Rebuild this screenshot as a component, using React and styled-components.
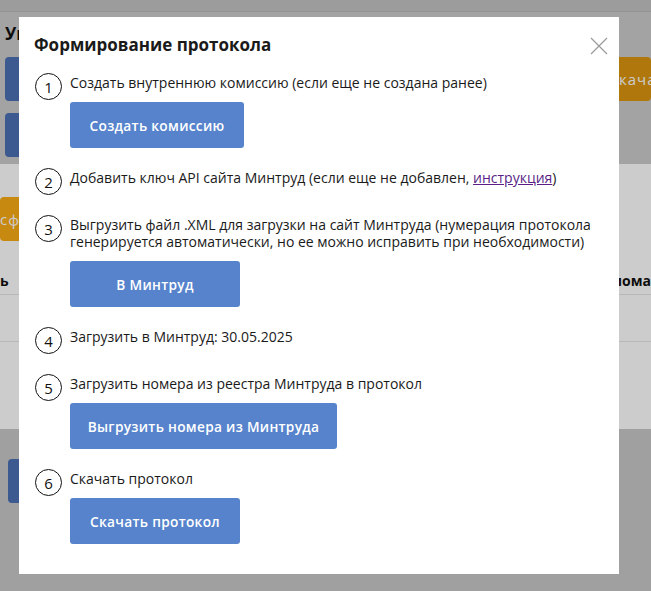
import React from "react";
import styled, { createGlobalStyle } from "styled-components";

const Global = createGlobalStyle`
  html, body { margin: 0; padding: 0; }
  body { font-family: "Open Sans", "Liberation Sans", sans-serif; overflow: hidden; }
  * { box-sizing: border-box; }
`;

const Page = styled.div`
  position: relative;
  width: 651px;
  height: 591px;
  overflow: hidden;
  background: #c8c8c8;
`;

const TopStrip = styled.div`
  height: 12px;
  background: #c3c3c3;
  border-bottom: 1px solid #b8b8b8;
`;

const Section = styled.div`
  background: ${(p) => p.$bg};
  height: ${(p) => p.$h}px;
  padding: ${(p) => p.$pad || "0"};
  display: flex;
  flex-direction: column;
  gap: ${(p) => p.$gap || 0}px;
  overflow: hidden;
`;

const Heading = styled.div`
  font-weight: 700;
  font-size: 17px;
  color: #111;
  padding-left: 5px;
`;

const BgRow = styled.div`
  display: flex;
  justify-content: space-between;
  align-items: center;
`;

const BgButton = styled.div`
  width: ${(p) => p.$w || 120}px;
  height: 44px;
  border-radius: 4px;
  background: ${(p) => p.$bg};
  margin-left: ${(p) => p.$ml || 0}px;
  color: #fff;
  font-size: 15px;
  display: flex;
  align-items: center;
  padding-left: ${(p) => p.$pl ?? 8}px;
  letter-spacing: 1px;
  white-space: nowrap;
  overflow: hidden;
`;

const TableHead = styled.div`
  display: flex;
  justify-content: space-between;
  font-weight: 700;
  font-size: 14px;
  color: #111;
  height: 32px;
  padding-top: 8px;
  border-bottom: 1px solid #e6e6e6;
  white-space: nowrap;
`;

const TableRow = styled.div`
  height: 47px;
  border-bottom: 1px solid #e6e6e6;
`;

const Overlay = styled.div`
  position: absolute;
  inset: 0;
  background: rgba(0, 0, 0, 0.2);
`;

const Modal = styled.div`
  position: absolute;
  left: 19px;
  top: 17px;
  width: 600px;
  background: #fff;
  padding: 17px 15px 30px 15px;
`;

const Title = styled.h2`
  margin: 0 0 17px 0;
  font-size: 17px;
  font-weight: 700;
  color: #1a1a1a;
  line-height: 22px;
`;

const Close = styled.button`
  position: absolute;
  right: 11px;
  top: 20px;
  width: 18px;
  height: 18px;
  border: 0;
  background: none;
  padding: 0;
`;

const Steps = styled.ol`
  list-style: none;
  margin: 0;
  padding: 0;
  display: flex;
  flex-direction: column;
  gap: 20px;
`;

const Step = styled.li`
  display: flex;
  align-items: flex-start;
  gap: 8px;
`;

const Num = styled.span`
  flex: none;
  width: 27px;
  height: 27px;
  border: 1px solid #111;
  border-radius: 50%;
  display: flex;
  align-items: center;
  justify-content: center;
  font-size: 15px;
  color: #111;
  margin-left: 1px;
`;

const Body = styled.div`
  display: flex;
  flex-direction: column;
  align-items: flex-start;
  gap: 11px;
  padding-top: 1px;
`;

const Text = styled.p`
  margin: 0;
  font-size: 14px;
  line-height: 17px;
  color: #1a1a1a;
`;

const Link = styled.a`
  color: #5a1f86;
  text-decoration: underline;
`;

const Button = styled.button`
  width: ${(p) => p.$w}px;
  height: 46px;
  border: 0;
  border-radius: 3px;
  background: #5683cc;
  color: #fff;
  font-family: "Open Sans", "Liberation Sans", sans-serif;
  font-weight: 600;
  font-size: 13.7px;
  letter-spacing: 0.3px;
  cursor: pointer;
`;

export default function App() {
  return (
    <>
      <Global />
      <Page>
        <TopStrip />
        <Section $bg="#cccccc" $h={152} $pad="10px 0 0 0" $gap={12}>
          <Heading>Уп</Heading>
          <BgRow>
            <BgButton $bg="#4b71b5" $ml={5} />
            <BgButton $bg="#dc960f" $w={40}>кача</BgButton>
          </BgRow>
          <BgRow>
            <BgButton $bg="#4b71b5" $ml={5} />
          </BgRow>
        </Section>
        <Section $bg="#ffffff" $h={265} $pad="33px 0 0 0" $gap={22}>
          <BgRow>
            <BgButton $bg="#fbac14" $w={60} $pl={0}>сфо</BgButton>
          </BgRow>
          <div>
            <TableHead>
              <span>ь</span>
              <span>лома</span>
            </TableHead>
            <TableRow />
          </div>
        </Section>
        <Section $bg="#c8c8c8" $h={161} $pad="30px 0 0 0">
          <BgRow>
            <BgButton $bg="#4b71b5" $ml={8} />
          </BgRow>
        </Section>
        <Overlay />
        <Modal>
          <Title>Формирование протокола</Title>
          <Close aria-label="Закрыть">
            <svg width="18" height="18" viewBox="0 0 18 18">
              <path d="M1 1 L17 17 M17 1 L1 17" stroke="#9a9a9a" strokeWidth="1.2" />
            </svg>
          </Close>
          <Steps>
            <Step>
              <Num>1</Num>
              <Body>
                <Text>Создать внутреннюю комиссию (если еще не создана ранее)</Text>
                <Button $w={174}>Создать комиссию</Button>
              </Body>
            </Step>
            <Step>
              <Num>2</Num>
              <Body>
                <Text>
                  Добавить ключ API сайта Минтруд (если еще не добавлен, <Link href="#">инструкция</Link>)
                </Text>
              </Body>
            </Step>
            <Step>
              <Num>3</Num>
              <Body>
                <Text>
                  Выгрузить файл .XML для загрузки на сайт Минтруда (нумерация протокола
                  <br />
                  генерируется автоматически, но ее можно исправить при необходимости)
                </Text>
                <Button $w={170}>В Минтруд</Button>
              </Body>
            </Step>
            <Step>
              <Num>4</Num>
              <Body>
                <Text>Загрузить в Минтруд: 30.05.2025</Text>
              </Body>
            </Step>
            <Step>
              <Num>5</Num>
              <Body>
                <Text>Загрузить номера из реестра Минтруда в протокол</Text>
                <Button $w={267}>Выгрузить номера из Минтруда</Button>
              </Body>
            </Step>
            <Step>
              <Num>6</Num>
              <Body>
                <Text>Скачать протокол</Text>
                <Button $w={170}>Скачать протокол</Button>
              </Body>
            </Step>
          </Steps>
        </Modal>
      </Page>
    </>
  );
}
